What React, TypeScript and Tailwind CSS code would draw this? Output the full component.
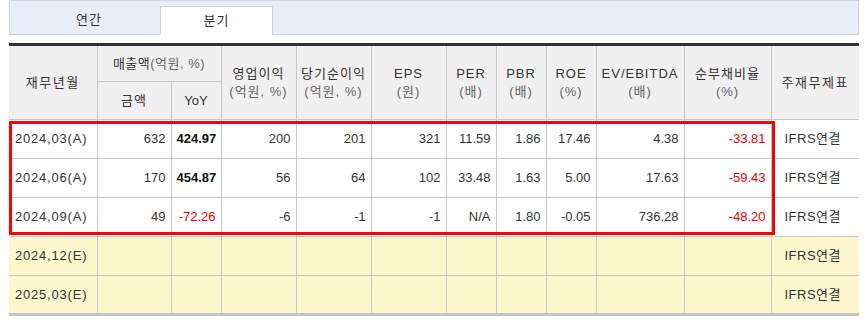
import React from "react";

type Cell = { v: string; bold?: boolean; red?: boolean };

interface Row {
  date: string;
  cells: Cell[];
  estimate?: boolean;
}

const FONT = "font-['Liberation_Sans','Noto_Sans_CJK_KR',sans-serif]";

const COLS = [88, 74, 50, 75, 75, 75, 50, 50, 50, 88, 87, 88];

const ROWS: Row[] = [
  {
    date: "2024,03(A)",
    cells: [
      { v: "632" },
      { v: "424.97", bold: true },
      { v: "200" },
      { v: "201" },
      { v: "321" },
      { v: "11.59" },
      { v: "1.86" },
      { v: "17.46" },
      { v: "4.38" },
      { v: "-33.81", red: true },
    ],
  },
  {
    date: "2024,06(A)",
    cells: [
      { v: "170" },
      { v: "454.87", bold: true },
      { v: "56" },
      { v: "64" },
      { v: "102" },
      { v: "33.48" },
      { v: "1.63" },
      { v: "5.00" },
      { v: "17.63" },
      { v: "-59.43", red: true },
    ],
  },
  {
    date: "2024,09(A)",
    cells: [
      { v: "49" },
      { v: "-72.26", red: true },
      { v: "-6" },
      { v: "-1" },
      { v: "-1" },
      { v: "N/A" },
      { v: "1.80" },
      { v: "-0.05" },
      { v: "736.28" },
      { v: "-48.20", red: true },
    ],
  },
  { date: "2024,12(E)", cells: Array.from({ length: 10 }, () => ({ v: "" })), estimate: true },
  { date: "2025,03(E)", cells: Array.from({ length: 10 }, () => ({ v: "" })), estimate: true },
];

// header cells that span both header rows: [title, unit]
const SINGLE_HEADERS: [string, string][] = [
  ["영업이익", "(억원, %)"],
  ["당기순이익", "(억원, %)"],
  ["EPS", "(원)"],
  ["PER", "(배)"],
  ["PBR", "(배)"],
  ["ROE", "(%)"],
  ["EV/EBITDA", "(배)"],
  ["순부채비율", "(%)"],
];

function Tabs() {
  return (
    <div className="flex h-[35px] items-end border border-[#cbd5e4] bg-[#e8eef8] text-[13px] tracking-[1px] text-[#333]">
      <div className="flex h-[28px] w-[150px] items-center justify-center pl-[8px]">연간</div>
      <div className="mb-[-1px] flex h-[29px] w-[113px] items-center justify-center border border-b-0 border-[#cbd5e4] bg-white">
        분기
      </div>
    </div>
  );
}

export default function App(): JSX.Element {
  const th = "border border-[#c8c8c8] bg-[#f0f0f0] font-normal text-[#333] leading-[18px]";
  const td = "h-[39px] border border-[#c8c8c8] px-[5px]";

  return (
    <div className={`w-[865px] bg-white pl-[9px] pr-[6px] ${FONT} text-[13px] text-[#333]`}>
      <Tabs />
      <div className="relative mt-[8px]">
        <table className="w-[850px] table-fixed border-collapse border-t-[3px] border-b-[3px] border-t-[#333] border-b-[#c4c4c4]">
          <colgroup>
            {COLS.map((w, i) => (
              <col key={i} style={{ width: w }} />
            ))}
          </colgroup>
          <thead>
            <tr className="h-[37px]">
              <th rowSpan={2} className={`${th} border-l-0 tracking-[1.5px]`}>
                재무년월
              </th>
              <th colSpan={2} className={`${th} tracking-[0.5px]`}>
                매출액<span className="text-[#666]">(억원, %)</span>
              </th>
              {SINGLE_HEADERS.map(([t, u]) => (
                <th key={t} rowSpan={2} className={`${th} tracking-[1px]`}>
                  <div>{t}</div>
                  <div className="text-[#666]">{u}</div>
                </th>
              ))}
              <th rowSpan={2} className={`${th} border-r-0 tracking-[1.5px]`}>
                주재무제표
              </th>
            </tr>
            <tr className="h-[38px]">
              <th className={`${th} tracking-[1px]`}>금액</th>
              <th className={th}>YoY</th>
            </tr>
          </thead>
          <tbody>
            {ROWS.map((row) => (
              <tr key={row.date} className={row.estimate ? "bg-[#fcf7cd]" : "bg-white"}>
                <td className={`${td} border-l-0 pl-[6px] text-left tracking-[0.8px]`}>{row.date}</td>
                {row.cells.map((c, i) => (
                  <td
                    key={i}
                    className={`${td} text-right ${c.red ? "text-[#e60000]" : c.bold ? "font-bold text-[#111]" : ""}`}
                  >
                    {c.v}
                  </td>
                ))}
                <td className={`${td} border-r-0 pr-[10px] text-center tracking-[0.5px]`}>IFRS연결</td>
              </tr>
            ))}
          </tbody>
        </table>
        {/* highlight annotation over the actual-results rows */}
        <div className="pointer-events-none absolute left-0 top-[78px] h-[114px] w-[766px] border-[3px] border-[#ff0000]" />
      </div>
    </div>
  );
}
